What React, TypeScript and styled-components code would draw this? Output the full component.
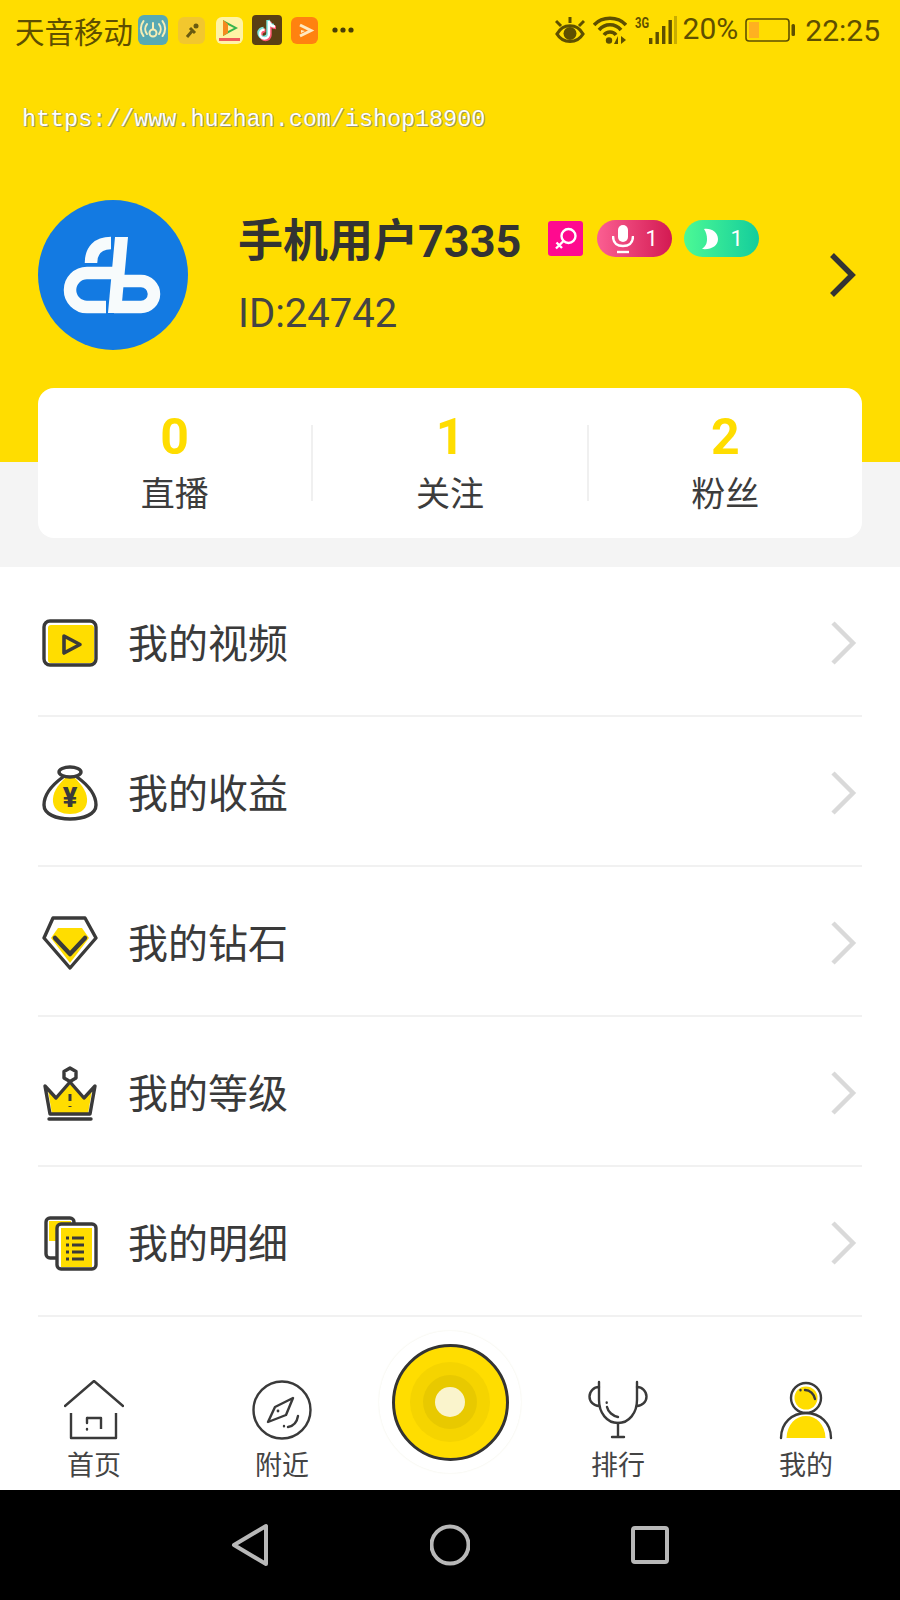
import React from 'react';
import styled, { createGlobalStyle } from 'styled-components';

const yellow = '#ffdd00';
const ink = '#3a3a3a';
const statusInk = '#5e4f00';
const cjk = `Roboto, 'Noto Sans CJK SC', sans-serif`;

const GlobalStyle = createGlobalStyle`
  html, body { margin: 0; padding: 0; background: #fff; }
  body { font-family: ${cjk}; overflow: hidden; }
`;

const Page = styled.div`
  width: 900px;
  height: 1600px;
  display: flex;
  flex-direction: column;
  overflow: hidden;
`;

const Header = styled.header`
  height: 462px;
  flex: none;
  background: ${yellow};
`;

const StatusBar = styled.div`
  height: 60px;
  display: flex;
  align-items: center;
  justify-content: space-between;
  padding: 0 20px 0 15px;
  color: ${statusInk};
`;

const StatusGroup = styled.div`
  display: flex;
  align-items: center;
`;

const Carrier = styled.span`
  font-size: 29.5px;
  width: 123px;
  white-space: nowrap;
`;

const AppIcon = styled.svg<{ $gap?: number }>`
  display: block;
  flex: none;
  margin-left: ${({ $gap }) => $gap ?? 0}px;
`;

const Percent = styled.span`
  font-size: 30px;
  margin-left: 6px;
  margin-top: -4px;
`;

const Clock = styled.span`
  font-size: 30px;
  margin-left: 10px;
`;

const Watermark = styled.div`
  margin: 45px 0 0 22px;
  height: 30px;
  line-height: 30px;
  font-family: 'Liberation Mono', monospace;
  font-size: 23.4px;
  color: #fff;
  text-shadow: 0 0 1px #8a8258, 1px 1px 0 #a39a60;
  white-space: nowrap;
`;

const Profile = styled.section`
  margin-top: 65px;
  height: 150px;
  display: flex;
  align-items: center;
  padding: 0 43px 0 38px;
`;

const Avatar = styled.div`
  width: 150px;
  height: 150px;
  flex: none;
  border-radius: 50%;
  background: #137ae2;
`;

const Who = styled.div`
  flex: 1;
  margin-left: 50px;
  display: flex;
  flex-direction: column;
`;

const NameRow = styled.div`
  display: flex;
  align-items: center;
`;

const Name = styled.span`
  font-size: 45px;
  font-weight: 700;
  color: #333;
  line-height: 60px;
  white-space: nowrap;
`;

const SexBadge = styled.span`
  width: 35px;
  height: 35px;
  margin: 0 0 7px 27px;
  border-radius: 3px;
  background: #ff0a8f;
  display: flex;
  align-items: center;
  justify-content: center;
`;

const Pill = styled.span<{ $from: string; $to: string; $gap: number }>`
  width: 75px;
  height: 37px;
  margin: 0 0 7px ${({ $gap }) => $gap}px;
  border-radius: 19px;
  background: linear-gradient(90deg, ${({ $from }) => $from}, ${({ $to }) => $to});
  color: #fff;
  font-size: 22px;
  display: flex;
  align-items: center;
  justify-content: center;
  gap: 12px;
`;

const UserId = styled.span`
  margin-top: 18px;
  font-size: 40px;
  line-height: 48px;
  color: #444;
`;

const StatsBand = styled.div`
  height: 105px;
  flex: none;
  background: #f4f4f4;
  padding: 0 38px;
`;

const StatsCard = styled.div`
  margin-top: -74px;
  height: 150px;
  border-radius: 16px;
  background: #fff;
  display: flex;
  align-items: center;
`;

const Stat = styled.div<{ $divided?: boolean }>`
  flex: 1;
  height: 76px;
  display: flex;
  flex-direction: column;
  align-items: center;
  justify-content: center;
  border-left: ${({ $divided }) => ($divided ? '2px solid #f0f0f0' : 'none')};
`;

const StatValue = styled.span`
  margin-top: 6px;
  font-size: 50px;
  font-weight: 700;
  line-height: 56px;
  color: ${yellow};
`;

const StatLabel = styled.span`
  font-size: 34px;
  line-height: 58px;
  color: #3c3c3c;
`;

const Menu = styled.div`
  flex: none;
  background: #fff;
`;

const MenuRow = styled.div`
  height: 150px;
  box-sizing: border-box;
  margin: 0 38px;
  padding: 0 4px 0 4px;
  border-bottom: 2px solid #f1f1f1;
  display: flex;
  align-items: center;
`;

const MenuLabel = styled.span`
  flex: 1;
  margin-left: 30px;
  font-size: 40px;
  color: #3a3a3a;
`;

const RowGlyph = styled.span`
  margin-top: 3px;
`;

const TabBar = styled.nav`
  height: 173px;
  flex: none;
  background: #fff;
  display: grid;
  grid-template-columns: 188px 188px 148px 188px 188px;
`;

const Tab = styled.div`
  display: flex;
  flex-direction: column;
  align-items: center;
  padding-top: 63px;
`;

const TabLabel = styled.span`
  font-size: 27px;
  line-height: 34px;
  margin-top: 9px;
  color: #444;
`;

const RecordCell = styled.div`
  display: flex;
  justify-content: center;
  padding-top: 14px;
`;

const RecordHalo = styled.div`
  width: 142px;
  height: 142px;
  border-radius: 50%;
  background: #fff;
  box-shadow: 0 0 2px #eeeee0;
  display: flex;
  align-items: center;
  justify-content: center;
`;

const RecordButton = styled.div`
  width: 117px;
  height: 117px;
  box-sizing: border-box;
  border: 3px solid #333;
  border-radius: 50%;
  background: ${yellow};
  display: flex;
  align-items: center;
  justify-content: center;
`;

const Ring = styled.div<{ $size: number; $color: string }>`
  width: ${({ $size }) => $size}px;
  height: ${({ $size }) => $size}px;
  border-radius: 50%;
  background: ${({ $color }) => $color};
  display: flex;
  align-items: center;
  justify-content: center;
`;

const SystemBar = styled.div`
  flex: 1;
  background: #000;
  display: flex;
  align-items: center;
  justify-content: center;
  gap: 160px;
`;

const dark = { stroke: ink, strokeWidth: 3.4, fill: 'none', strokeLinecap: 'round', strokeLinejoin: 'round' } as const;

const Chevron = ({ color, width }: { color: string; width: number }) => (
  <AppIcon width="30" height="44" viewBox="0 0 30 44">
    <path d="M5 2 L25 22 L5 42" fill="none" stroke={color} strokeWidth={width} />
  </AppIcon>
);

const Logo = () => (
  <svg width="150" height="150" viewBox="0 0 150 150">
    <g fill="none" stroke="#f7fbfc" strokeWidth="12.5">
      <path d="M73 43 C60 43 53 50 53 63" />
      <path d="M76 73 H49 a17 17 0 0 0 0 34 H68" />
      <path d="M84 81 H103 a13 13 0 0 1 0 26 H76" />
    </g>
    <path d="M77 37 H90 L83 113 H70 Z" fill="#f7fbfc" />
  </svg>
);

const StatusLeftIcons = () => (
  <>
    <AppIcon width="30" height="30" viewBox="0 0 30 30">
      <rect width="30" height="30" rx="6" fill="#58a9b3" />
      <g fill="none" stroke="#f6eeb6" strokeWidth="2" strokeLinecap="round">
        <circle cx="15" cy="18" r="3.5" />
        <path d="M15 14 V8 M9 9 a8 8 0 0 0 0 10 M21 9 a8 8 0 0 1 0 10 M5.5 6 a12 12 0 0 0 0 15 M24.5 6 a12 12 0 0 1 0 15" />
      </g>
    </AppIcon>
    <AppIcon $gap={10} width="27" height="27" viewBox="0 0 27 27">
      <rect width="27" height="27" rx="6" fill="#f2c72e" />
      <path d="M9 20 L15 13 M12 11 L17 16" stroke="#6a5a10" strokeWidth="3" />
      <circle cx="18" cy="9" r="2.5" fill="#6a5a10" />
    </AppIcon>
    <AppIcon $gap={11} width="27" height="27" viewBox="0 0 27 27">
      <rect width="27" height="27" rx="6" fill="#fff3a6" />
      <path d="M7 3 L22 11 L7 19 Z" fill="#37b44a" />
      <path d="M10 7 L18 11 L10 15 Z" fill="#fff3a6" />
      <path d="M7 3 L7 19 L12 16 L12 7 Z" fill="#f58a1f" />
      <rect x="3" y="21" width="21" height="3" fill="#ef5a5a" />
    </AppIcon>
    <AppIcon $gap={9} width="30" height="30" viewBox="0 0 30 30">
      <rect width="30" height="30" rx="4" fill="#5a3f14" />
      <path d="M17 6 V19 a4.5 4.5 0 1 1 -4.5 -4.5 M17 6 c0.5 3.5 3 5.5 6 5.5" fill="none" stroke="#ff5a72" strokeWidth="3.4" transform="translate(1 1)" />
      <path d="M17 6 V19 a4.5 4.5 0 1 1 -4.5 -4.5 M17 6 c0.5 3.5 3 5.5 6 5.5" fill="none" stroke="#7fe6dc" strokeWidth="3.4" transform="translate(-1 -1)" />
      <path d="M17 6 V19 a4.5 4.5 0 1 1 -4.5 -4.5 M17 6 c0.5 3.5 3 5.5 6 5.5" fill="none" stroke="#fff" strokeWidth="2.4" />
    </AppIcon>
    <AppIcon $gap={9} width="27" height="27" viewBox="0 0 27 27">
      <rect width="27" height="27" rx="6" fill="#ff8210" />
      <path d="M9 8 L20 13.5 L9 19" fill="none" stroke="#ffe9c0" strokeWidth="3" />
      <path d="M10 13 L14 14 L10 16 Z" fill="#ffe9c0" />
    </AppIcon>
    <AppIcon $gap={14} width="22" height="6" viewBox="0 0 22 6">
      <circle cx="3" cy="3" r="2.6" fill="#4a3f05" />
      <circle cx="11" cy="3" r="2.6" fill="#4a3f05" />
      <circle cx="19" cy="3" r="2.6" fill="#4a3f05" />
    </AppIcon>
  </>
);

const StatusRightIcons = () => (
  <>
    <AppIcon width="30" height="28" viewBox="0 0 30 28">
      <path d="M2 18 C8 7 22 7 28 18 C22 28 8 28 2 18 Z" fill="none" stroke={statusInk} strokeWidth="3.2" />
      <circle cx="15" cy="17.5" r="6.5" fill={statusInk} />
      <path d="M6 10 L1 5 M15 7 V1 M24 10 L29 5" stroke={statusInk} strokeWidth="3" />
    </AppIcon>
    <AppIcon $gap={8} width="34" height="28" viewBox="0 0 34 28">
      <g fill="none" stroke={statusInk} strokeWidth="3.6">
        <path d="M1 9 C9 0 25 0 33 9" />
        <path d="M6 14 C12 7 22 7 28 14" />
        <path d="M11 19 C14 15 20 15 23 19" />
      </g>
      <circle cx="16" cy="24.5" r="3.2" fill={statusInk} />
      <path d="M25 20 V28 H21 Z M28 20 V28 L33 24 Z" fill={statusInk} />
    </AppIcon>
    <AppIcon $gap={8} width="42" height="28" viewBox="0 0 42 28">
      <text x="0" y="12" fontFamily="Roboto, sans-serif" fontWeight="700" fontSize="14" fill={statusInk} textLength="14" lengthAdjust="spacingAndGlyphs">3G</text>
      <rect x="14" y="22" width="3.4" height="6" fill={statusInk} />
      <rect x="20.5" y="16" width="3.4" height="12" fill={statusInk} />
      <rect x="27" y="10" width="3.4" height="18" fill={statusInk} />
      <rect x="33.5" y="4" width="3.4" height="24" fill={statusInk} />
      <rect x="39" y="0" width="3" height="28" fill="#c9ad00" />
    </AppIcon>
  </>
);

const Battery = () => (
  <AppIcon $gap={7} width="50" height="24" viewBox="0 0 50 24">
    <rect x="1" y="1" width="43" height="22" rx="3" fill="none" stroke={statusInk} strokeWidth="1.6" />
    <rect x="4" y="4" width="10" height="16" fill="#ffb020" />
    <rect x="46.5" y="6" width="3.5" height="12" rx="1.5" fill={statusInk} />
  </AppIcon>
);

const VideoIcon = () => (
  <AppIcon width="56" height="56" viewBox="0 0 56 56">
    <rect x="6" y="10" width="46" height="38" rx="3" fill={yellow} />
    <rect x="2" y="6" width="52" height="44" rx="6" {...dark} />
    <path d="M22 21 L38 29.5 L22 38 Z" fill="none" stroke={ink} strokeWidth="3.6" strokeLinejoin="round" />
  </AppIcon>
);

const BagIcon = () => (
  <AppIcon width="56" height="56" viewBox="0 0 56 56">
    <path d="M23 13 H33 C40 20 46 28 45 37 C44 46 36 49 28 49 C20 49 12 46 11 37 C10 28 16 20 23 13 Z" fill={yellow} />
    <ellipse cx="28" cy="7" rx="11" ry="5" {...dark} />
    <path d="M21 12 C10 20 2 30 2 40 C2 49 14 54 28 54 C42 54 54 49 54 40 C54 30 46 20 35 12" {...dark} />
    <text x="28" y="42" textAnchor="middle" fontFamily="Roboto, sans-serif" fontWeight="900" fontSize="27" fill={ink}>¥</text>
  </AppIcon>
);

const DiamondIcon = () => (
  <AppIcon width="56" height="56" viewBox="0 0 56 56">
    <path d="M16 13 H40 L47 23 L28 48 L9 23 Z" fill={yellow} />
    <path d="M11 3 H43 L54 23 L28 53 L2 23 Z" {...dark} />
    <path d="M13 23 L28 39 L43 23" fill="none" stroke={ink} strokeWidth="4.5" strokeLinecap="round" strokeLinejoin="round" />
  </AppIcon>
);

const CrownIcon = () => (
  <AppIcon width="56" height="56" viewBox="0 0 56 56">
    <path d="M14 32 L28 19 L42 32 L50 25 L46 49 H10 L6 25 Z" fill={yellow} />
    <path d="M3 21 L14 33 L28 17 L42 33 L53 21 L48 49 H8 Z" {...dark} />
    <path d="M28 3 L34 6.5 V13 L28 16.5 L22 13 V6.5 Z" {...dark} />
    <path d="M7 54 H49" {...dark} />
    <path d="M28 29 V36 M28 41 V42" stroke={ink} strokeWidth="3" fill="none" />
  </AppIcon>
);

const DocsIcon = () => (
  <AppIcon width="56" height="56" viewBox="0 0 56 56">
    <rect x="7" y="6" width="22" height="20" fill={yellow} />
    <rect x="4" y="3" width="28" height="40" rx="4" {...dark} />
    <rect x="15" y="9" width="39" height="45" rx="4" fill="#fff" stroke={ink} strokeWidth="3.4" />
    <rect x="19" y="13" width="31" height="39" fill={yellow} />
    {[23, 30, 37, 44].map((y) => (
      <path key={y} d={`M24 ${y} H27 M30 ${y} H42`} stroke={ink} strokeWidth="2.8" />
    ))}
  </AppIcon>
);

const thin = { stroke: ink, strokeWidth: 2.4, fill: 'none', strokeLinecap: 'round', strokeLinejoin: 'round' } as const;

const HomeIcon = () => (
  <AppIcon width="60" height="60" viewBox="0 0 60 60">
    <path d="M1 26 L30 1 L59 26" {...thin} />
    <path d="M7 33 V58 H52 V33" {...thin} strokeLinecap="butt" />
    <path d="M23 38 H37 V49" {...thin} strokeLinecap="butt" />
    <path d="M23 38 V43 M23 49 V49.5" {...thin} />
  </AppIcon>
);

const CompassIcon = () => (
  <AppIcon width="60" height="60" viewBox="0 0 60 60">
    <circle cx="30" cy="30" r="28.5" {...thin} />
    <path d="M41 18 L23 27 L16 42 L34 35 Z" {...thin} />
    <circle cx="26" cy="31" r="1.4" fill={ink} />
    <path d="M46 36 C45 42 42 46 36 47 M32 46 V46.2" {...thin} />
  </AppIcon>
);

const TrophyIcon = () => (
  <AppIcon width="60" height="60" viewBox="0 0 60 60">
    <path d="M11 2 V20 C11 33 19 43 30 43 C41 43 49 33 49 20 V2" {...thin} />
    <path d="M11 7 A9.5 9.5 0 0 0 11 26 M49 7 A9.5 9.5 0 0 1 49 26" {...thin} />
    <path d="M19 27 C20 32 25 36 30 37 M18.7 22.5 V22.7" {...thin} />
    <path d="M30 43 V57 M24 57 H36" {...thin} />
  </AppIcon>
);

const MeIcon = () => (
  <AppIcon width="60" height="60" viewBox="0 0 60 60">
    <circle cx="30" cy="18" r="11.5" fill={yellow} />
    <circle cx="30" cy="18" r="15" {...thin} />
    <path d="M10.5 58 C11 44 20 36 30 36 C40 36 49 44 49.5 58 Z" fill={yellow} />
    <path d="M5 58 C5 43 16 33 30 33 C44 33 55 43 55 58" {...thin} />
    <path d="M29 10 C34 10 38 14 39 19 M24.5 10 V10.2" {...thin} />
  </AppIcon>
);

const systemStroke = { stroke: '#b8b8b8', strokeWidth: 4, fill: 'none', strokeLinejoin: 'round' } as const;

const menu = [
  { label: '我的视频', icon: <VideoIcon /> },
  { label: '我的收益', icon: <BagIcon /> },
  { label: '我的钻石', icon: <DiamondIcon /> },
  { label: '我的等级', icon: <CrownIcon /> },
  { label: '我的明细', icon: <DocsIcon /> },
];

const stats = [
  { value: 0, label: '直播' },
  { value: 1, label: '关注' },
  { value: 2, label: '粉丝' },
];

const App: React.FC = (): JSX.Element => (
  <Page>
    <GlobalStyle />
    <Header>
      <StatusBar>
        <StatusGroup>
          <Carrier>天音移动</Carrier>
          <StatusLeftIcons />
        </StatusGroup>
        <StatusGroup>
          <StatusRightIcons />
          <Percent>20%</Percent>
          <Battery />
          <Clock>22:25</Clock>
        </StatusGroup>
      </StatusBar>
      <Watermark>https://www.huzhan.com/ishop18900</Watermark>
      <Profile>
        <Avatar>
          <Logo />
        </Avatar>
        <Who>
          <NameRow>
            <Name>手机用户7335</Name>
            <SexBadge>
              <svg width="28" height="28" viewBox="0 0 28 28" fill="none" stroke="#fff" strokeWidth="2.4">
                <circle cx="16.5" cy="11" r="7" />
                <path d="M11.5 16 L4 23.5 M4.5 17.5 L10 23" />
              </svg>
            </SexBadge>
            <Pill $from="#fb5f92" $to="#d31a52" $gap={14}>
              <svg width="22" height="30" viewBox="0 0 22 30">
                <rect x="6" y="1" width="10" height="17" rx="5" fill="#fff" />
                <path d="M1 12 C1 19 5 22 11 22 C17 22 21 19 21 12" fill="none" stroke="#fff" strokeWidth="2.4" />
                <path d="M5 28 H17" stroke="#fff" strokeWidth="2.4" />
              </svg>
              1
            </Pill>
            <Pill $from="#4cf995" $to="#14cd9c" $gap={12}>
              <svg width="18" height="22" viewBox="0 0 18 22">
                <path d="M3 1 C10 0 17 4 17 11 C17 18 10 22 1 21 C5 18 6 15 6 11 C6 7 5 4 3 1 Z" fill="#fff" />
              </svg>
              1
            </Pill>
          </NameRow>
          <UserId>ID:24742</UserId>
        </Who>
        <Chevron color="#333" width={5.5} />
      </Profile>
    </Header>

    <StatsBand>
      <StatsCard>
        {stats.map(({ value, label }, i) => (
          <Stat key={label} $divided={i > 0}>
            <StatValue>{value}</StatValue>
            <StatLabel>{label}</StatLabel>
          </Stat>
        ))}
      </StatsCard>
    </StatsBand>

    <Menu>
      {menu.map(({ label, icon }) => (
        <MenuRow key={label}>
          <RowGlyph>{icon}</RowGlyph>
          <MenuLabel>{label}</MenuLabel>
          <RowGlyph>
            <Chevron color="#d9d9d9" width={4.5} />
          </RowGlyph>
        </MenuRow>
      ))}
    </Menu>

    <TabBar>
      <Tab>
        <HomeIcon />
        <TabLabel>首页</TabLabel>
      </Tab>
      <Tab>
        <CompassIcon />
        <TabLabel>附近</TabLabel>
      </Tab>
      <RecordCell>
        <RecordHalo>
          <RecordButton>
            <Ring $size={80} $color="#f5d400">
              <Ring $size={54} $color="#e8c900">
                <Ring $size={30} $color="#faf4cc" />
              </Ring>
            </Ring>
          </RecordButton>
        </RecordHalo>
      </RecordCell>
      <Tab>
        <TrophyIcon />
        <TabLabel>排行</TabLabel>
      </Tab>
      <Tab>
        <MeIcon />
        <TabLabel>我的</TabLabel>
      </Tab>
    </TabBar>

    <SystemBar>
      <AppIcon width="40" height="44" viewBox="0 0 40 44">
        <path d="M36 3 V41 L4 22 Z" {...systemStroke} />
      </AppIcon>
      <AppIcon width="40" height="44" viewBox="0 0 40 44">
        <circle cx="20" cy="22" r="18.5" {...systemStroke} />
      </AppIcon>
      <AppIcon width="40" height="44" viewBox="0 0 40 44">
        <rect x="3" y="5" width="34" height="34" rx="2" {...systemStroke} />
      </AppIcon>
    </SystemBar>
  </Page>
);

export default App;
